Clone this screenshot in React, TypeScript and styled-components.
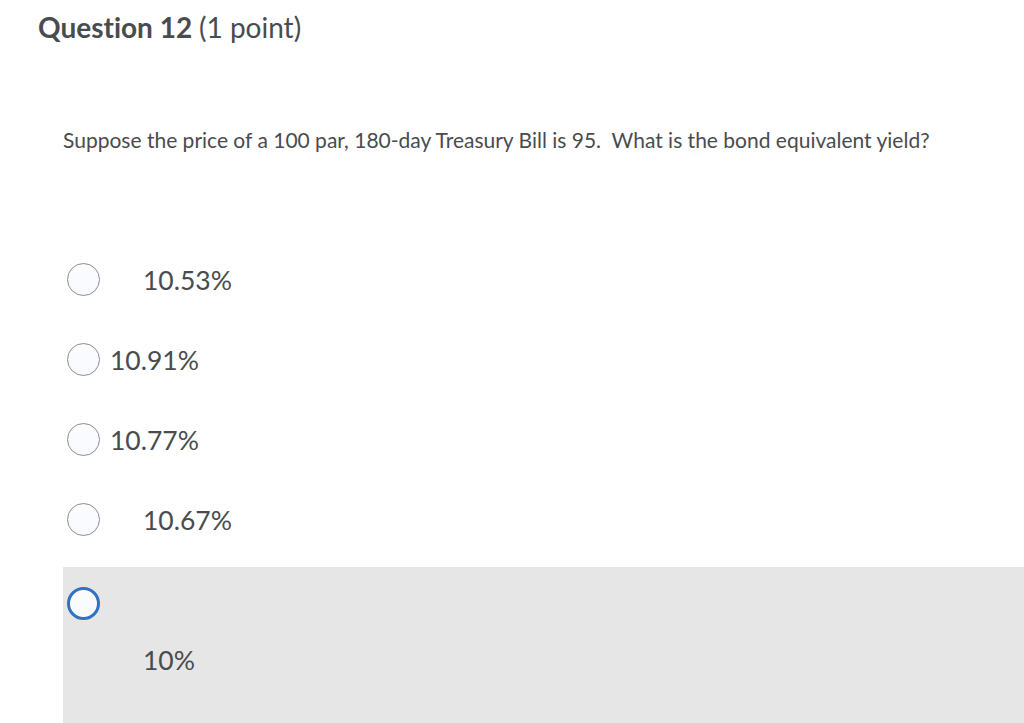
import React from "react";
import styled, { createGlobalStyle } from "styled-components";

const GlobalStyle = createGlobalStyle`
  html, body {
    margin: 0;
    padding: 0;
    background: #ffffff;
    font-family: Lato, "Liberation Sans", sans-serif;
    font-variant-ligatures: none;
    color: #494c4e;
  }
`;

const Page = styled.div`
  width: 1024px;
  height: 723px;
  overflow: hidden;
  display: flex;
  flex-direction: column;
`;

const Title = styled.h1`
  margin: 0;
  padding: 10px 0 0 38px;
  font-size: 28px;
  line-height: 34px;
  font-weight: 700;
  color: #494c4e;
`;

const Points = styled.span`
  font-weight: 400;
`;

const Prompt = styled.p`
  margin: 0;
  padding: 83px 0 0 63px;
  font-size: 21px;
  line-height: 26px;
  color: #494c4e;
`;

const Options = styled.div`
  display: flex;
  flex-direction: column;
  padding: 110px 0 0 63px;
  gap: 47px;
`;

const Option = styled.label`
  display: flex;
  align-items: center;
  height: 33px;
  padding-left: 4px;
`;

const Radio = styled.span<{ $focused?: boolean }>`
  flex: none;
  box-sizing: border-box;
  width: 33px;
  height: 33px;
  border-radius: 50%;
  background: #f9fbff;
  border: ${(p) => (p.$focused ? "3px solid #2e74c2" : "1.5px solid #8b8d8f")};
`;

const Label = styled.span<{ $gap: number }>`
  margin-left: ${(p) => p.$gap}px;
  font-size: 26.5px;
  color: #494c4e;
`;

const Selected = styled.div`
  margin: 31px 0 0 63px;
  height: 160px;
  background: #e6e6e6;
  display: flex;
  flex-direction: column;
  padding: 20px 0 0 4px;
  box-sizing: border-box;
`;

const SelectedLabel = styled.span`
  margin: 24px 0 0 76px;
  font-size: 26.5px;
  color: #494c4e;
`;

const choices = [
  { text: "10.53%", gap: 43 },
  { text: "10.91%", gap: 10 },
  { text: "10.77%", gap: 10 },
  { text: "10.67%", gap: 43 },
];

export default function App() {
  return (
    <Page>
      <GlobalStyle />
      <Title>
        Question 12 <Points>(1 point)</Points>
      </Title>
      <Prompt>
        Suppose the price of a 100 par, 180-day Treasury Bill is 95.&nbsp; What is the bond equivalent yield?
      </Prompt>
      <Options>
        {choices.map((c) => (
          <Option key={c.text}>
            <Radio />
            <Label $gap={c.gap}>{c.text}</Label>
          </Option>
        ))}
      </Options>
      <Selected>
        <Radio $focused />
        <SelectedLabel>10%</SelectedLabel>
      </Selected>
    </Page>
  );
}
